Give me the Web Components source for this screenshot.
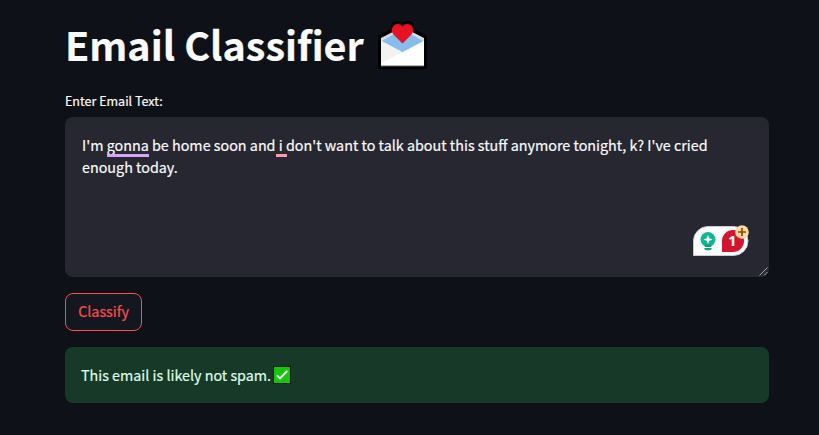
<!DOCTYPE html>
<html lang="en">
<head>
<meta charset="utf-8">
<title>Email Classifier</title>
<style>
html,body{margin:0;height:100%;background:#0e1117}
body{font-family:"Noto Sans CJK SC","Noto Sans",sans-serif;color:#fafafa;overflow:hidden;-webkit-text-stroke:.2px currentColor}
</style>
</head>
<body>
<classifier-app></classifier-app>
<script>
const define=(name,html)=>customElements.define(name,class extends HTMLElement{
  constructor(){super();this.attachShadow({mode:'open'}).innerHTML=html;}
});

define('love-letter-icon',`<style>:host{display:block;width:49px;height:49px}svg{display:block}</style>
<svg width="49" height="49" viewBox="0 0 49 49">
<path d="M0 14.500 13 8C12 3.500 15 0 19.500 0c2 0 3.600.6 5 1.800C25.900.6 27.500 0 29.500 0 34 0 37 3.500 36 8l13 6.500V48H0z" fill="#000"/>
<path d="M3 17 24.500 6 46 17V45H3z" fill="#dcdcdc"/>
<path d="M4 20 24.500 8 45 20 24.500 31z" fill="#83beec"/>
<path d="M3 20 24.500 31.500 46 20V44H3z" fill="#fff"/>
<path d="M3 20 24.500 31.500 3 42z" fill="#f2f2f2"/>
<path d="M3 44H46V45.200H3z" fill="#b8b8b8"/>
<path d="M24.500 22.500 15.500 13.500C13.300 11.300 13.300 7.800 15.200 5.300 17.500 2.400 22 2.200 24.500 5.400 27 2.200 31.500 2.400 33.800 5.300 35.700 7.800 35.700 11.300 33.500 13.500z" fill="#e81224"/>
</svg>`);

define('check-icon',`<style>:host{display:block;width:18px;height:18px}svg{display:block}</style>
<svg width="18" height="18" viewBox="0 0 18 18"><path d="M0 0h18v18H0z" fill="#06170c"/><path d="M1 1h16v16H1z" fill="#16c60c"/><path d="M4 9.300 7 12.300 14.200 5" fill="none" stroke="#fff" stroke-width="1.900"/></svg>`);

define('page-title',`<style>
:host{display:flex;height:49px;align-items:flex-start;gap:14px}
h1{margin:0;font-size:39.500px;line-height:45px;font-weight:700;white-space:nowrap}
</style><h1><slot></slot></h1><love-letter-icon></love-letter-icon>`);

define('marked-word',`<style>
:host{position:relative;white-space:pre}
:host::after{content:"";position:absolute;left:0;right:var(--extend,0);bottom:-2px;height:3px;background:var(--mark)}
</style><slot></slot>`);

define('writing-badge',`<style>:host{position:absolute;left:627px;top:107px;width:58px;height:33px}svg{display:block}
text{font:700 15px "Open Sans",sans-serif;fill:#fff}</style>
<svg width="58" height="33" viewBox="0 0 58 33">
<path d="M1.500 31.500V17A14.500 14.500 0 0 1 16 2.500H41.500a14.500 14.500 0 0 1 0 29z" fill="#fff" stroke="#c9cad8"/>
<circle cx="16" cy="15.500" r="7.500" fill="#0fb894"/>
<path d="M12.800 20.500h6.400v2.400h-6.400zM12.300 23.900h7.400v.4a2 2 0 0 1-2 2h-3.400a2 2 0 0 1-2-2z" fill="#0ba283"/>
<path d="M16 11 17.300 14.200 20.500 15.500 17.300 16.800 16 20 14.700 16.800 11.500 15.500 14.700 14.200z" fill="#fff"/>
<path d="M30 28V17A11 11 0 1 1 41 28z" fill="#d8132f"/>
<text x="36" y="22">1</text>
<circle cx="50" cy="8" r="6.800" fill="#fbd9a0"/>
<path d="M50 4v8M46 8h8" stroke="#8a4b08" stroke-width="1.700"/>
</svg>`);

define('email-field',`<style>
:host{display:flex;flex-direction:column}
label{font-size:12.530px;line-height:22px;height:27px}
.box{position:relative;box-sizing:border-box;height:160px;padding:17px 17px;border-radius:8px;background:#262730;font-size:14.330px;line-height:22px}
.line{white-space:pre}
.grip{position:absolute;right:1px;bottom:1px}
</style><label>Enter Email Text:</label>
<div class="box"><div class="line">I'm <marked-word style="--mark:#d5a5f8">gonna</marked-word> be home soon and<marked-word style="--mark:#ff9aa8;--extend:-4px"> i</marked-word> don't want to talk about this stuff anymore tonight, k? I've cried</div><div class="line">enough today.</div>
<writing-badge></writing-badge>
<svg class="grip" width="9" height="9" viewBox="0 0 9 9"><path d="M.5 8.500 8.500.5M5 8.500 8.500 5" stroke="#b5b6ba" stroke-width=".9"/></svg></div>`);

define('classify-button',`<style>
:host{display:block;width:77px;height:38px}
button{box-sizing:border-box;width:100%;height:100%;padding:0 0 2px;border:1px solid #ff4b4b;border-radius:8px;background:#131720;color:#ff4b4b;font:inherit;font-size:14.320px;line-height:34px;display:block;-webkit-text-stroke:.2px currentColor}
</style><button><slot></slot></button>`);

define('result-alert',`<style>
:host{display:flex;box-sizing:border-box;height:56px;padding:0 16px;align-items:center;gap:2px;border-radius:8px;background:#173928;color:#dffde9;font-size:14.320px;line-height:24px}
</style><span><slot></slot></span><check-icon></check-icon>`);

define('classifier-app',`<style>
:host{display:flex;flex-direction:column;box-sizing:border-box;width:819px;height:435px;padding:21px 50px 0 65px}
email-field{margin-top:20px}
classify-button{margin-top:16px}
result-alert{margin-top:16px}
</style>
<page-title>Email Classifier</page-title>
<email-field></email-field>
<classify-button>Classify</classify-button>
<result-alert>This email is likely not spam.</result-alert>`);
</script>
</body>
</html>
